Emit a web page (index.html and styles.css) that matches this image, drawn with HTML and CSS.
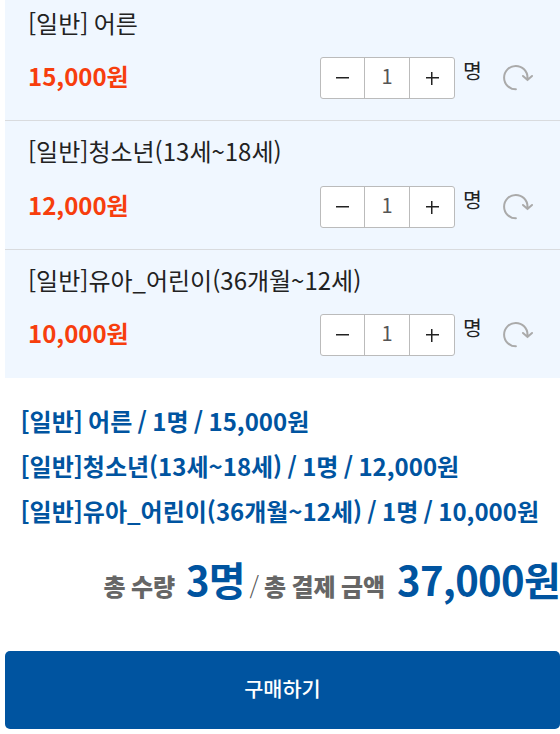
FILE: index.html
```html
<!DOCTYPE html>
<html lang="ko"><head><meta charset="utf-8"><title>구매</title><link rel="stylesheet" href="styles.css"></head>
<body>
<main class="page">
<section class="options">
<article class="option"><h2 class="name">[일반] 어른</h2><div class="row"><strong class="price">15,000원</strong><div class="stepper"><button class="minus" aria-label="감소"></button><span class="qty">1</span><button class="plus" aria-label="증가"></button></div><span class="unit">명</span><svg class="reset" viewBox="0 0 32 30"><path d="M13.900 26.300A11.700 11.700 0 1 1 25.500 14.600V17M21 13L25.500 17L30 13"/></svg></div></article>
<article class="option"><h2 class="name">[일반]청소년(13세~18세)</h2><div class="row"><strong class="price">12,000원</strong><div class="stepper"><button class="minus" aria-label="감소"></button><span class="qty">1</span><button class="plus" aria-label="증가"></button></div><span class="unit">명</span><svg class="reset" viewBox="0 0 32 30"><path d="M13.900 26.300A11.700 11.700 0 1 1 25.500 14.600V17M21 13L25.500 17L30 13"/></svg></div></article>
<article class="option"><h2 class="name">[일반]유아_어린이(36개월~12세)</h2><div class="row"><strong class="price">10,000원</strong><div class="stepper"><button class="minus" aria-label="감소"></button><span class="qty">1</span><button class="plus" aria-label="증가"></button></div><span class="unit">명</span><svg class="reset" viewBox="0 0 32 30"><path d="M13.900 26.300A11.700 11.700 0 1 1 25.500 14.600V17M21 13L25.500 17L30 13"/></svg></div></article>
</section>
<ul class="summary"><li>[일반] 어른 / 1명 / 15,000원</li><li>[일반]청소년(13세~18세) / 1명 / 12,000원</li><li>[일반]유아_어린이(36개월~12세) / 1명 / 10,000원</li></ul>
<div class="total"><span class="label">총 수량</span><strong class="count">3명</strong><span class="slash">/</span><span class="label">총 결제 금액</span><strong class="amount">37,000원</strong></div>
<button class="buy">구매하기</button>
</main>
</body></html>
```
FILE: styles.css
```css
*{box-sizing:border-box}
body{margin:0;background:#fff;color:#222;font-family:"Noto Sans CJK KR",sans-serif;overflow:hidden;word-spacing:-1.4px}
button{font:inherit;padding:0;border:0;background:none}
.page{width:555px;height:734px;margin-left:5px;white-space:nowrap}
.options{height:378px;background:#f0f7ff}
.option{height:129px;padding:12px 23px 0;border-bottom:1px solid #d9dbde}
.option:first-child{height:121px;padding-top:5px}
.option:last-child{height:128px;border:0}
.name{margin:0;height:36px;font-size:24px;line-height:36px;font-weight:400}
.row{display:flex;height:42px;margin-top:17px}
.option:first-child .row{margin-top:16px}
.option:last-child .row{margin-top:16px}
.price{width:292px;font-size:24px;line-height:38px;color:#f73e0d}
.stepper{display:flex;width:135px;height:42px;border:1px solid #bbb;border-radius:3px;background:#fff}
.stepper>*{width:43px;display:flex;align-items:center;justify-content:center}
.stepper .plus{width:44px}
.stepper .qty{width:46px;border:solid #bbb;border-width:0 1px;color:#555;font-size:20px;line-height:36px;align-items:flex-start}
.minus::before,.plus::before{content:"";width:13px;height:13px;background:linear-gradient(#222,#222) center/13px 1.500px no-repeat}
.plus::before{background:linear-gradient(#222,#222) center/13px 1.500px no-repeat,linear-gradient(#222,#222) center/1.500px 13px no-repeat}
.unit{width:20px;margin-left:8px;font-size:20.5px;line-height:27px}
.reset{width:32px;height:30px;margin:6px 0 0 19px;fill:none;stroke:#aaa;stroke-width:2;stroke-linecap:round}
.summary{list-style:none;margin:0;padding:20px 15.500px 0;font-size:24px;line-height:45px;font-weight:700;color:#0054a0}
.total{display:flex;align-items:baseline;justify-content:flex-end;height:80px;margin-top:9px;line-height:75px}
.label{font-size:24px;font-weight:900;color:#666}
.count,.amount{font-size:40px;letter-spacing:-.7px;color:#0054a0;margin-left:12px}
.count{margin-left:11px;letter-spacing:-1px}
.slash{font-size:24px;font-weight:300;color:#555;margin:0 5px}
.buy{display:block;width:555px;height:78px;margin-top:29px;padding-bottom:4px;border-radius:5px;background:#0054a0;color:#fff;font-size:20.800px;font-weight:500}
```
